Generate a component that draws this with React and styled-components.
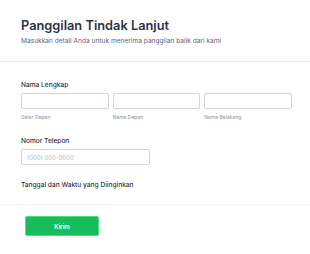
import React from 'react';
import styled, { createGlobalStyle } from 'styled-components';

const GlobalStyle = createGlobalStyle`
    html, body {
        margin: 0;
        padding: 0;
        background: #ffffff;
    }
    body {
        font-family: Inter, "Noto Sans", "Liberation Sans", sans-serif;
        color: #2c3345;
    }
`;

const App = () => {
    return (
        <FormWrapper>
            <GlobalStyle />
            <Header>
                <Title>Panggilan Tindak Lanjut</Title>
                <Subtitle>Masukkan detail Anda untuk menerima panggilan balik dari kami</Subtitle>
            </Header>

            <Body>
                <Field>
                    <Label>Nama Lengkap</Label>
                    <NameRow>
                        <NamePart>
                            <Input />
                            <SubLabel>Gelar Depan</SubLabel>
                        </NamePart>
                        <NamePart>
                            <Input />
                            <SubLabel>Nama Depan</SubLabel>
                        </NamePart>
                        <NamePart>
                            <Input />
                            <SubLabel>Nama Belakang</SubLabel>
                        </NamePart>
                    </NameRow>
                </Field>

                <Field>
                    <Label>Nomor Telepon</Label>
                    <Input $width="129px" placeholder="(000) 000-0000" />
                </Field>

                <Field>
                    <Label>Tanggal dan Waktu yang Diinginkan</Label>
                </Field>
            </Body>

            <Footer>
                <SubmitButton type="button">Kirim</SubmitButton>
            </Footer>
        </FormWrapper>
    );
};

export default App;

const FormWrapper = styled.div`
    width: 310px;
    min-height: 254px;
    background: #ffffff;
`;

const Header = styled.div`
    padding: 17px 21px 15px;
    border-bottom: 1px solid #ececec;
`;

const Title = styled.h1`
    margin: 0;
    font-size: 12.8px;
    line-height: 17px;
    font-weight: 600;
    color: #2c3345;
`;

const Subtitle = styled.p`
    margin: 2px 0 0;
    font-size: 6.6px;
    line-height: 10px;
    color: #5a6580;
`;

const Body = styled.div`
    padding: 18px 18px 0 21px;
    display: flex;
    flex-direction: column;
    gap: 15px;
`;

const Field = styled.div`
    display: flex;
    flex-direction: column;
`;

const Label = styled.label`
    font-size: 6.6px;
    line-height: 10px;
    font-weight: 500;
    color: #2c3345;
    margin-bottom: 3px;
`;

const NameRow = styled.div`
    display: grid;
    grid-template-columns: repeat(3, 1fr);
    gap: 4px;
`;

const NamePart = styled.div`
    display: flex;
    flex-direction: column;
`;

const Input = styled.input`
    box-sizing: border-box;
    width: ${(p) => p.$width || '100%'};
    height: 16px;
    margin: 0;
    padding: 0 5px;
    border: 1px solid #d3d6e0;
    border-radius: 2px;
    background: #ffffff;
    font-family: inherit;
    font-size: 6px;
    color: #2c3345;
    outline: none;

    &::placeholder {
        color: #b4b9c6;
    }
`;

const SubLabel = styled.span`
    margin-top: 5px;
    font-size: 5px;
    line-height: 7px;
    color: #8d8fa8;
`;

const Footer = styled.div`
    margin-top: 11px;
    border-top: 1px solid #f2f2f2;
    padding: 11px 25px 16px;
`;

const SubmitButton = styled.button`
    display: block;
    box-sizing: border-box;
    width: 74px;
    height: 20px;
    padding: 0;
    border: 1px solid #55d98b;
    border-radius: 2px;
    background: #18bd5b;
    color: #ffffff;
    font-family: inherit;
    font-size: 6px;
    font-weight: 600;
    cursor: pointer;
`;
